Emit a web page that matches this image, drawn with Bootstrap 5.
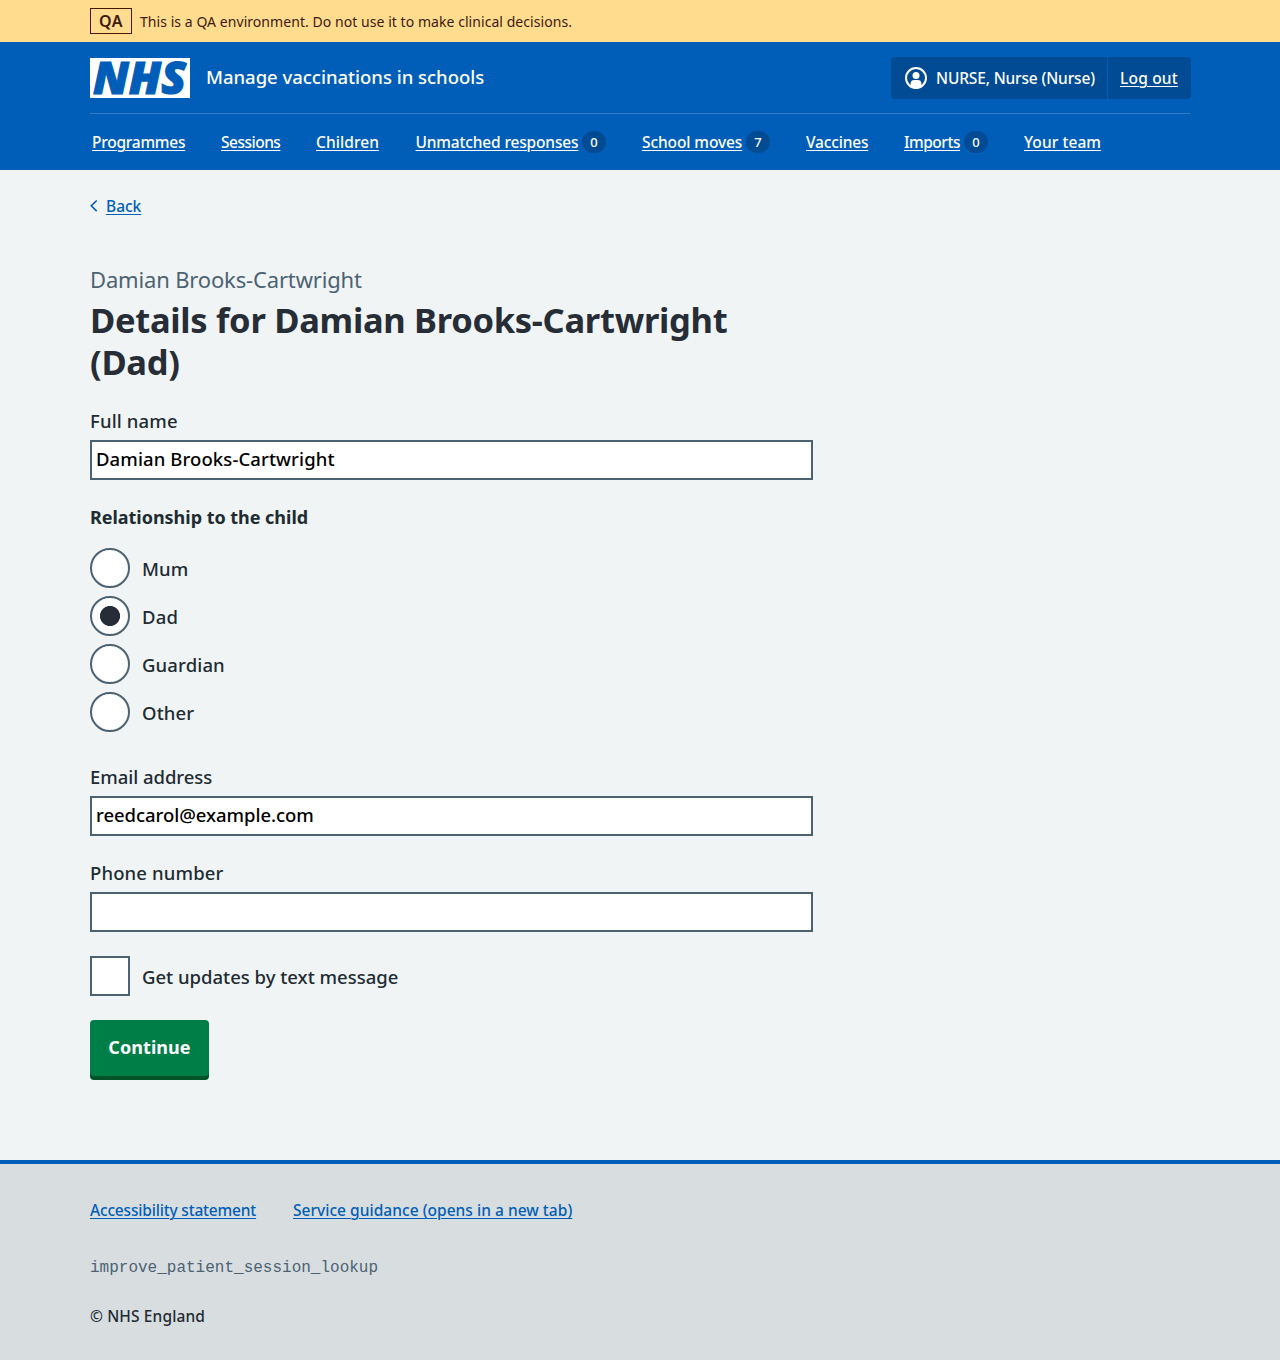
<!DOCTYPE html>
<html lang="en">
<head>
<meta charset="utf-8">
<meta name="viewport" content="width=device-width, initial-scale=1">
<title>Details for Damian Brooks-Cartwright (Dad)</title>
<link href="https://cdn.jsdelivr.net/npm/bootstrap@5.3.0/dist/css/bootstrap.min.css" rel="stylesheet">
<style>
  body { font-family: "Noto Sans", "Open Sans", Arial, sans-serif; font-weight: 500; font-size: 15.5px; line-height: 24px; color: #212b32; background: #d8dde0; }
  .app-width { width: 1100px; margin: 0 auto; }
  .env-banner { background: #ffdc8e; color: #3d1a10; height: 42px; font-size: 14px; font-weight: 400; letter-spacing: .055px; }
  .env-tag { border: 1px solid #4d1503; width: 42px; height: 26px; font-size: 16px; line-height: 24px; font-weight: 600; text-align: center; letter-spacing: .4px; }
  .env-text { padding-top: 2px; }
  .app-header { background: #005eb8; height: 128px; }
  .app-header, .app-header a { color: #fff; }
  .app-header a, .app-link { text-decoration: underline; text-underline-offset: 2px; text-decoration-thickness: 1px; }
  .brand-row { height: 72px; border-bottom: 1px solid #337ec6; }
  .nhs-logo { overflow: visible; }
  .service-name { font-size: 18.5px; letter-spacing: -.02px; padding-bottom: 1px; }
  .account { background: #004b93; width: 300px; height: 42px; border-radius: 4px; margin-right: -1px; flex: none; }
  .account-user { width: 217px; padding-left: 14px; border-right: 1px solid #005eb8; letter-spacing: -.15px; gap: 9px; flex: none; }
  .account-out { padding-left: 12px; letter-spacing: .2px; }
  .main-nav { height: 56px; gap: 36px; padding: 0 0 0 2px; }
  .main-nav > div { display: flex; align-items: center; justify-content: space-between; white-space: nowrap; }
  .main-nav > :nth-child(1) { width: 93px; letter-spacing: -.25px; }
  .main-nav > :nth-child(2) { width: 59px; letter-spacing: -.5px; }
  .main-nav > :nth-child(3) { width: 63.5px; letter-spacing: .07px; }
  .main-nav > :nth-child(4) { width: 190.5px; letter-spacing: -.16px; }
  .main-nav > :nth-child(5) { width: 128px; letter-spacing: -.1px; }
  .main-nav > :nth-child(6) { width: 62px; letter-spacing: -.17px; }
  .main-nav > :nth-child(7) { width: 84px; letter-spacing: -.47px; }
  .main-nav > :nth-child(8) { letter-spacing: .07px; }
  .nav-count { background: #004b93; width: 24px; height: 22px; border-radius: 11px; font-size: 13px; line-height: 23px; text-align: center; letter-spacing: 0; }
  .app-main { background: #f0f4f5; height: 990px; padding-top: 24px; }
  .app-link { color: #005eb8; }
  .caption { font-size: 22px; line-height: 30px; font-weight: 400; color: #4c6272; letter-spacing: -.16px; margin-top: 46px; }
  .page-title { font-size: 34.5px; line-height: 42px; font-weight: 700; letter-spacing: -.29px; color: #262d36; margin: 5px 0 25px; }
  .form-col { width: 723px; font-size: 18.5px; line-height: 28px; letter-spacing: .14px; }
  .field-label { display: block; height: 32px; line-height: 25px; }
  .field-input { display: block; width: 100%; height: 40px; border: 2px solid #4c6272; border-radius: 0; padding: 0 4px 3px; background: #fff; color: #000; font-size: 18.5px; font-weight: 500; letter-spacing: .1px; }
  .email-label, .email-input { letter-spacing: -.04px; }
  .choice { display: flex; align-items: center; gap: 12px; height: 40px; margin-bottom: 8px; }
  .choice span { padding-top: 2px; }
  .choice input { appearance: none; width: 40px; height: 40px; margin: 0; border: 2px solid #4c6272; background: #fff; flex: none; }
  .choice input[type=radio] { border-radius: 50%; }
  .choice input[type=radio]:checked { background: radial-gradient(circle, #262d36 9.7px, #fff 10.3px); }
  .updates-choice { letter-spacing: 0; }
  .group-title { font-size: 18px; line-height: 27px; font-weight: 700; letter-spacing: -.03px; margin: 0 0 17px; float: none; }
  .continue-btn { width: 119px; height: 56px; border: 0; border-radius: 4px; background: #007e48; color: #fff; font-size: 18px; font-weight: 700; letter-spacing: .06px; box-shadow: 0 4px 0 #005428; padding: 0 0 3px; }
  .app-footer { border-top: 4px solid #005eb8; background: #d8dde0; height: 196px; padding-top: 34px; }
  .footer-links { gap: 37px; letter-spacing: .03px; }
  .footer-links > :first-child { width: 166px; letter-spacing: -.18px; white-space: nowrap; }
  .build-name { font-family: "Liberation Mono", monospace; font-size: 16px; font-weight: 400; color: #4c6272; margin-top: 34px; }
  .copyright { letter-spacing: .12px; margin-top: 24px; }
</style>
<script src="https://cdn.jsdelivr.net/npm/bootstrap@5.3.0/dist/js/bootstrap.bundle.min.js"></script>
</head>
<body>
<div class="env-banner">
  <div class="app-width d-flex align-items-center gap-2 h-100">
    <strong class="env-tag">QA</strong>
    <span class="env-text">This is a QA environment. Do not use it to make clinical decisions.</span>
  </div>
</div>

<header class="app-header">
  <div class="app-width">
    <div class="brand-row d-flex align-items-center justify-content-between">
      <div class="d-flex align-items-center gap-3">
        <svg class="nhs-logo" width="100" height="40" viewBox="0 0 100 40" role="img" aria-label="NHS">
          <rect width="100" height="40" fill="#fff"/>
          <text x="3" y="36" textLength="93" lengthAdjust="spacingAndGlyphs" font-family="Open Sans, Noto Sans, sans-serif" font-size="45" font-weight="800" font-style="italic" fill="#005eb8" stroke="#005eb8" stroke-width="1.2">NHS</text>
        </svg>
        <span class="service-name">Manage vaccinations in schools</span>
      </div>
      <div class="account d-flex align-items-stretch">
        <div class="account-user d-flex align-items-center">
          <svg width="22" height="22" viewBox="0 0 22 22" aria-hidden="true">
            <circle cx="11" cy="11" r="10" fill="none" stroke="#fff" stroke-width="2"/>
            <circle cx="11" cy="8.6" r="3.5" fill="#fff"/>
            <path d="M5.6 20V16.5a3.5 3.5 0 0 1 3.5-3.5h3.8a3.5 3.5 0 0 1 3.5 3.5V20A10 10 0 0 1 5.6 20Z" fill="#fff"/>
          </svg>
          <span>NURSE, Nurse (Nurse)</span>
        </div>
        <a href="#" class="account-out d-flex align-items-center">Log out</a>
      </div>
    </div>
    <nav class="main-nav d-flex align-items-center">
      <div><a href="#">Programmes</a></div>
      <div><a href="#">Sessions</a></div>
      <div><a href="#">Children</a></div>
      <div><a href="#">Unmatched responses</a><span class="nav-count">0</span></div>
      <div><a href="#">School moves</a><span class="nav-count">7</span></div>
      <div><a href="#">Vaccines</a></div>
      <div><a href="#">Imports</a><span class="nav-count">0</span></div>
      <div><a href="#">Your team</a></div>
    </nav>
  </div>
</header>

<main class="app-main">
  <div class="app-width">
    <div class="d-flex align-items-center">
      <svg width="8" height="14" viewBox="0 0 8 14" class="me-2" aria-hidden="true"><path d="M6.7 1.5 1.3 6.8l5.4 5.3" fill="none" stroke="#005eb8" stroke-width="1.6"/></svg>
      <a href="#" class="app-link">Back</a>
    </div>
    <form class="form-col">
      <div class="caption">Damian Brooks-Cartwright</div>
      <h1 class="page-title">Details for Damian Brooks-Cartwright<br>(Dad)</h1>
      <label class="field-label" for="name">Full name</label>
      <input class="field-input" id="name" value="Damian Brooks-Cartwright">
      <fieldset class="mt-4">
        <legend class="group-title">Relationship to the child</legend>
        <label class="choice"><input type="radio" name="rel"><span>Mum</span></label>
        <label class="choice"><input type="radio" name="rel" checked><span>Dad</span></label>
        <label class="choice"><input type="radio" name="rel"><span>Guardian</span></label>
        <label class="choice mb-4"><input type="radio" name="rel"><span>Other</span></label>
      </fieldset>
      <label class="field-label email-label mt-2" for="email">Email address</label>
      <input class="field-input email-input" id="email" value="reedcarol@example.com">
      <label class="field-label mt-4" for="phone">Phone number</label>
      <input class="field-input" id="phone">
      <label class="choice updates-choice my-4"><input type="checkbox"><span>Get updates by text message</span></label>
      <button type="button" class="continue-btn">Continue</button>
    </form>
  </div>
</main>

<footer class="app-footer">
  <div class="app-width">
    <div class="footer-links d-flex">
      <a href="#" class="app-link">Accessibility statement</a>
      <a href="#" class="app-link">Service guidance (opens in a new tab)</a>
    </div>
    <div class="build-name">improve_patient_session_lookup</div>
    <div class="copyright">© NHS England</div>
  </div>
</footer>
</body>
</html>
